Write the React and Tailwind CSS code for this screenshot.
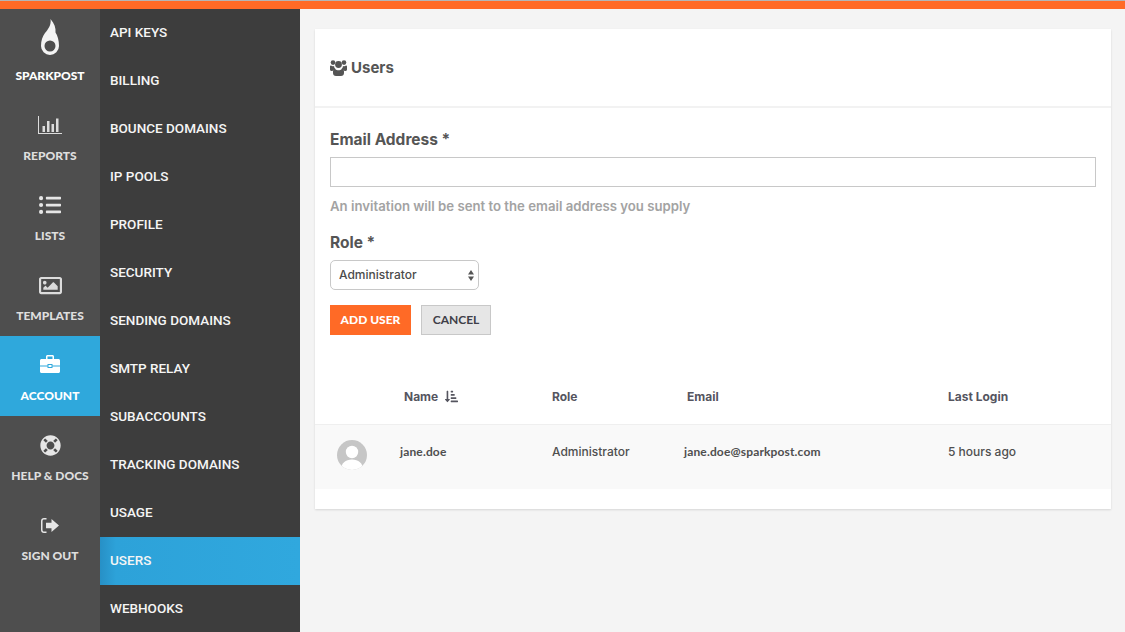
import React from "react";
import { FaListUl, FaRegImage, FaLifeRing, FaSortAmountDownAlt } from "react-icons/fa";

const Flame = () => (
  <svg width="18" height="36" viewBox="0 0 18 36" fill="#f4f4f4">
    <path fillRule="evenodd" d="M9.500 0C13.500 4.500 15 9 14.500 13.500c2 3 3.500 8 3.500 13.500a9 9 0 0 1-18 0c0-5.500 1.500-9.500 4-13C7 10.500 10.500 6 9.500 0zM9 21.500a5.500 5.500 0 1 0 0 11 5.500 5.500 0 0 0 0-11z" />
  </svg>
);

const Bars = () => (
  <svg width="24" height="18" viewBox="0 0 24 18" fill="#dcdcdc">
    <path d="M0 0h1v17h23v1H0z" />
    <rect x="4.500" y="10" width="2.500" height="6" />
    <rect x="9" y="5" width="2.500" height="11" />
    <rect x="13.500" y="8" width="2.500" height="8" />
    <rect x="18" y="2.500" width="2.500" height="13.500" />
  </svg>
);

const Briefcase = () => (
  <svg width="20" height="20" viewBox="0 0 20 20" fill="#ffffff">
    <path fillRule="evenodd" d="M6 4V1.500C6 .7 6.700 0 7.500 0h5c.8 0 1.500.7 1.500 1.500V4h-1.500V1.500h-5V4z" />
    <path d="M1.500 4h17c.8 0 1.500.7 1.500 1.500V10.500h-7.500V9h-5v1.500H0V5.500C0 4.700.7 4 1.500 4z" />
    <path d="M0 11.500h7.500V13h5v-1.500H20v5c0 .8-.7 1.500-1.500 1.500h-17C.7 18 0 17.300 0 16.500z" />
    <rect x="8.500" y="10" width="3" height="2" />
  </svg>
);

const SignOut = () => (
  <svg width="18" height="15" viewBox="0 0 18 15" fill="#e6e6e6">
    <path d="M5.500 0H3C1.300 0 0 1.300 0 3v9c0 1.700 1.300 3 3 3h2.500v-1.500H3c-.8 0-1.500-.7-1.500-1.500V3c0-.8.700-1.500 1.500-1.500h2.500z" />
    <path d="M10.500 1l7.500 6.500-7.500 6.500v-3.700H5V4.700h5.500z" />
  </svg>
);

const UsersIcon = () => (
  <svg width="17" height="16" viewBox="0 0 17 16" fill="#555555">
    <circle cx="3" cy="2.600" r="2.300" />
    <circle cx="14" cy="2.600" r="2.300" />
    <circle cx="8.500" cy="4.500" r="3.400" />
    <path d="M0 6.500C0 5.800.5 5.600 1 5.600c1 .7 2 .7 3 .4.100 1.200.6 2.200 1.400 3C3.800 9.400 2.800 10.300 2.500 11 1 11 0 10.500 0 9.500z" />
    <path d="M17 6.500c0-.7-.5-.9-1-.9-1 .7-2 .7-3 .4-.1 1.200-.6 2.200-1.400 3 1.600.4 2.600 1.300 2.900 2 1.500 0 2.500-.5 2.500-1.500z" />
    <path d="M5 8.700c1 1 2.200 1.500 3.500 1.500S11 9.700 12 8.700c1.300.2 2 1.200 2 2.800v1.500c0 1.800-1.200 3-3 3H6c-1.800 0-3-1.200-3-3v-1.500c0-1.600.7-2.600 2-2.800z" />
  </svg>
);

const Avatar = () => (
  <svg width="30" height="30" viewBox="0 0 30 30">
    <circle cx="15" cy="15" r="15" fill="#c6c6c6" />
    <clipPath id="avatar-clip"><circle cx="15" cy="15" r="15" /></clipPath>
    <g clipPath="url(#avatar-clip)" fill="#ffffff">
      <circle cx="15" cy="12" r="6.200" />
      <path d="M4 30c0-7 4.500-10.500 11-10.500S26 23 26 30z" />
    </g>
  </svg>
);

const mainNav = [
  { label: "REPORTS", icon: <Bars /> },
  { label: "LISTS", icon: <FaListUl size={22} color="#e6e6e6" /> },
  { label: "TEMPLATES", icon: <FaRegImage size={23} color="#dcdcdc" /> },
  { label: "ACCOUNT", icon: <Briefcase />, active: true },
  { label: "HELP & DOCS", icon: <FaLifeRing size={21} color="#e6e6e6" /> },
  { label: "SIGN OUT", icon: <SignOut /> },
];

const subNav = [
  "API KEYS", "BILLING", "BOUNCE DOMAINS", "IP POOLS", "PROFILE", "SECURITY", "SENDING DOMAINS",
  "SMTP RELAY", "SUBACCOUNTS", "TRACKING DOMAINS", "USAGE", "USERS", "WEBHOOKS",
];

export default function App() {
  return (
    <div className="h-[632px] w-[1125px] overflow-hidden flex flex-col bg-[#f4f4f4] font-['Lato','Liberation_Sans',sans-serif]">
      <div className="h-[9px] shrink-0 border-t border-[#b5b5b5] bg-[#ff6a26]" />
      <div className="flex flex-1 min-h-0">
        <nav className="w-[100px] shrink-0 bg-[#4e4e4e] flex flex-col">
          <div className="h-[87px] flex flex-col items-center pt-[10px]">
            <Flame />
            <span className="mt-[13px] text-[12px] leading-[16px] font-black text-white">SPARKPOST</span>
          </div>
          {mainNav.map((item) => (
            <div
              key={item.label}
              className={`h-[80px] flex flex-col items-center ${item.active ? "bg-[#2fa8dc] text-white" : "text-[#dedede]"}`}
            >
              <div className="h-[26px] mt-[16px] flex items-center justify-center">{item.icon}</div>
              <span className="mt-[10px] text-[12px] leading-[16px] font-black whitespace-nowrap">{item.label}</span>
            </div>
          ))}
        </nav>

        <nav className="w-[200px] shrink-0 bg-[#3d3d3d] flex flex-col">
          {subNav.map((label) => (
            <div
              key={label}
              className={`h-[48px] shrink-0 flex items-center pl-[10px] pb-[2px] text-[13.5px] font-medium font-['Roboto',sans-serif] text-[#f5f5f5] ${
                label === "USERS" ? "bg-gradient-to-r from-[#2790c6] via-[#2da2d9] via-[8%] to-[#30a8de]" : ""
              }`}
            >
              {label}
            </div>
          ))}
        </nav>

        <main className="flex-1 min-w-0 pt-[20px] pl-[15px] pr-[14px] font-['Inter',sans-serif]">
          <div className="bg-white h-[480px] shadow-[0_1px_2px_rgba(0,0,0,0.12)]">
            <div className="h-[79px] border-b-2 border-[#f2f2f2] flex items-center gap-[4px] pl-[15px] text-[#555555]">
              <UsersIcon />
              <h1 className="pt-[2px] text-[15px] font-bold">Users</h1>
            </div>

            <form className="px-[15px] pt-[21px]">
              <label className="block text-[15.5px] leading-[22px] font-bold text-[#555555]">Email Address *</label>
              <input className="mt-[6px] block w-full h-[30px] border border-[#c8c8c8] bg-white" />
              <p className="mt-[9px] text-[13.2px] leading-[20px] font-semibold text-[#a3a3a3]">
                An invitation will be sent to the email address you supply
              </p>

              <label className="block mt-[16px] text-[15.5px] leading-[22px] font-bold text-[#555555]">Role *</label>
              <div className="relative mt-[6px] w-[149px] h-[30px]">
                <select className="w-full h-full appearance-none border border-[#c8c8c8] rounded-[5px] bg-white pl-[8px] text-[12px] font-medium text-[#4b4b4b]">
                  <option>Administrator</option>
                </select>
                <svg className="absolute right-[5px] top-[10px] pointer-events-none" width="6" height="11" viewBox="0 0 6 11" fill="#555555">
                  <path d="M3 0l3 4.500H0zM3 11L0 6.500h6z" />
                </svg>
              </div>

              <div className="mt-[15px] flex gap-[10px] font-['Lato',sans-serif]">
                <button type="button" className="w-[81px] h-[30px] bg-[#ff6a26] text-white text-[12px] font-black">ADD USER</button>
                <button type="button" className="w-[70px] h-[30px] bg-[#e6e6e6] border border-[#c8c8c8] text-[#3f3f48] text-[12px] font-bold">CANCEL</button>
              </div>
            </form>

            <div className="mt-[36px]">
              <div className="h-[54px] grid grid-cols-[89px_148px_135px_261px_1fr] items-center pb-[2px] border-b border-[#efefef] text-[12px] font-bold text-[#55555f]">
                <span />
                <span className="flex items-center gap-[7px]">
                  Name <FaSortAmountDownAlt size={13} />
                </span>
                <span>Role</span>
                <span>Email</span>
                <span>Last Login</span>
              </div>
              <div className="h-[64px] bg-[#f9f9f9] grid grid-cols-[85px_152px_132px_264px_1fr] items-center text-[12px] font-medium text-[#4f4f4f] pb-[11px]">
                <span className="pl-[22px] pt-[7px]"><Avatar /></span>
                <span className="font-['Lato',sans-serif] font-bold tracking-[0.15px]">jane.doe</span>
                <span>Administrator</span>
                <span className="font-['Lato',sans-serif] font-bold tracking-[0.15px]">jane.doe@sparkpost.com</span>
                <span>5 hours ago</span>
              </div>
            </div>
          </div>
        </main>
      </div>
    </div>
  );
}
